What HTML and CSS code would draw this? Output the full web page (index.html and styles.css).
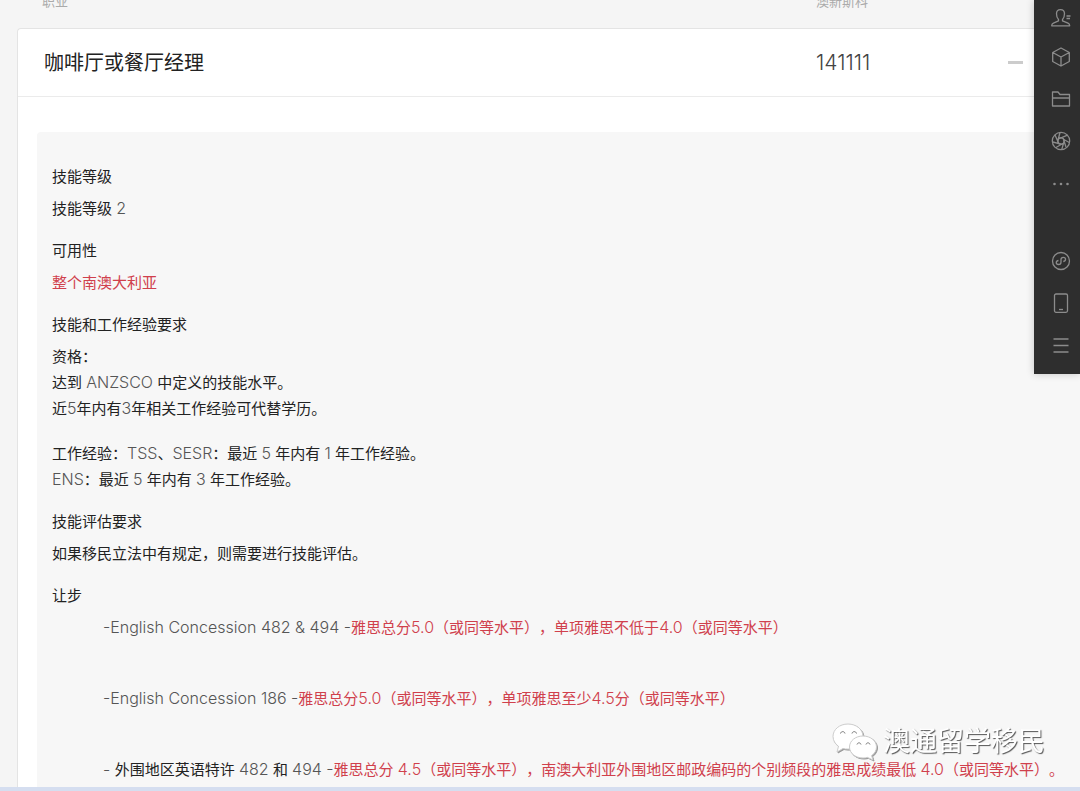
FILE: index.html
```html
<!DOCTYPE html>
<html lang="zh-CN">

<head>
     <meta charset="UTF-8" />
     <title>咖啡厅或餐厅经理</title>
     <meta name="viewport" content="width=device-width, initial-scale=1" />
     <link rel="stylesheet" href="styles.css">
</head>

<body>

     <div class="columns list-head">
          <span>职业</span>
          <span>澳新斯科</span>
     </div>

     <main class="card">
          <div class="columns card-head">
               <h1>咖啡厅或餐厅经理</h1>
               <span class="code">141111</span>
               <button class="toggle" aria-label="收起"></button>
          </div>

          <div class="details">
               <h2>技能等级</h2>
               <p>技能等级 <span class="latin">2</span></p>

               <h2>可用性</h2>
               <p class="red">整个南澳大利亚</p>

               <h2>技能和工作经验要求</h2>
               <p>资格：<br>
                    达到 <span class="latin">ANZSCO</span> 中定义的技能水平。<br>
                    近<span class="latin">5</span>年内有<span class="latin">3</span>年相关工作经验可代替学历。</p>
               <p>工作经验：<span class="latin">TSS</span>、<span class="latin">SESR</span>：最近 <span class="latin">5</span> 年内有 <span class="latin">1</span> 年工作经验。<br>
                    <span class="latin">ENS</span>：最近 <span class="latin">5</span> 年内有 <span class="latin">3</span> 年工作经验。</p>

               <h2>技能评估要求</h2>
               <p>如果移民立法中有规定，则需要进行技能评估。</p>

               <h2>让步</h2>
               <ul class="concessions">
                    <li><span class="latin">-English Concession 482 &amp; 494 -</span><span class="red">雅思总分<span class="latin">5.0</span>（或同等水平），单项雅思不低于<span class="latin">4.0</span>（或同等水平）</span></li>
                    <li><span class="latin">-English Concession 186 -</span><span class="red">雅思总分<span class="latin">5.0</span>（或同等水平），单项雅思至少<span class="latin">4.5</span>分（或同等水平）</span></li>
                    <li><span class="latin">- </span>外围地区英语特许 <span class="latin">482</span> 和 <span class="latin">494 -</span><span class="red">雅思总分 <span class="latin">4.5</span>（或同等水平），南澳大利亚外围地区邮政编码的个别频段的雅思成绩最低 <span class="latin">4.0</span>（或同等水平）。</span></li>
               </ul>
          </div>
     </main>

     <nav class="sidebar">
          <button aria-label="联系人">
               <svg viewBox="0 0 20 20"><path d="M7.500 11.500C5.800 10 5.500 7.800 5.500 5.800 5.500 3.400 7.200 1.700 9.500 1.700s4 1.700 4 4.100c0 2-.3 4.200-2 5.700v1.400l5.500 2.300c1.200.5 1.700 1.300 1.700 2.600H.7c0-1.300.5-2.100 1.700-2.600l5.100-2.300zM15.500 8h4M15.500 10.500h3.500" /></svg>
          </button>
          <button aria-label="收藏">
               <svg viewBox="0 0 20 20"><path d="M10 1l8.300 4.500v9L10 19l-8.300-4.500v-9zM1.700 5.500L10 10l8.300-4.500M10 10v9" /></svg>
          </button>
          <button aria-label="文件">
               <svg viewBox="0 0 20 20"><path d="M1.500 17v-14h5.500l2 2.500h9.500v11.500zM1.500 9h17" /></svg>
          </button>
          <button aria-label="朋友圈">
               <svg viewBox="0 0 20 20"><circle cx="10" cy="10" r="8.700" /><circle cx="10" cy="10" r="3.200" /><path d="M10 6.800l6.500-2.600M12.300 7.700l2.700 8.300M13.200 10l-2.500 8.600M12.300 12.300L5 16.500M10 13.200L1.800 11M7.700 12.300L4 4M6.800 10L9 1.500M7.700 7.700l8-3.200M12.800 8.500l5.500 3" /></svg>
          </button>
          <button aria-label="更多">
               <svg class="filled" viewBox="0 0 20 20"><circle cx="3.500" cy="11" r="1.300" /><circle cx="10" cy="11" r="1.300" /><circle cx="16.500" cy="11" r="1.300" /></svg>
          </button>
          <button class="lower" aria-label="小程序">
               <svg viewBox="0 0 20 20"><circle cx="10" cy="10" r="8.500" /><path d="M7.500 9.500c-3 .5-3 4 0 4 1.500 0 2.500-1 2.500-2.300V8.500c0-1.300 1-2.200 2.300-2.200 3 0 3 3.700 0 4.200" /></svg>
          </button>
          <button aria-label="手机">
               <svg viewBox="0 0 20 20"><rect x="3.500" y="1" width="13" height="18.300" rx="1.500" /><path d="M8 16.500h4" /></svg>
          </button>
          <button aria-label="设置">
               <svg viewBox="0 0 20 20"><path d="M2.500 4h15M2.500 10.500h15M2.500 17h15" /></svg>
          </button>
     </nav>

     <div class="watermark">
          <svg viewBox="0 0 46 38">
               <path d="M16 1C7.500 1 1 6.500 1 13.500c0 4 2.200 7.500 5.500 9.800L5 29l6-3.500c1.600.4 3.300.6 5 .6 8.400 0 15-5.600 15-12.600S24.400 1 16 1z" />
               <path d="M31 13c-7.500 0-13.500 4.800-13.500 11S23.500 35 31 35c1.500 0 3-.2 4.500-.6L41 37l-1.400-4.400c3-2 4.900-5.200 4.900-8.600 0-6.200-6-11-13.500-11z" />
               <path class="eyes" d="M8.500 10.500c.5-2.500 4-2.500 4.500 0M20 10.500c.5-2.500 4-2.500 4.500 0M25 21.500c.5-2.200 3.500-2.200 4 0M34 21.500c.5-2.200 3.500-2.200 4 0" />
          </svg>
          <span>澳通留学移民</span>
     </div>

     <footer class="bottom-bar"></footer>

</body>

</html>
```
FILE: styles.css
```css
:root {
     --bg: #f5f5f5;
     --panel: #f7f7f7;
     --text: #222;
     --latin: #555;
     --red: #d0404c;
     --sidebar: #2e2e2e;
}

* {
     box-sizing: border-box;
     margin: 0;
     padding: 0;
}

body {
     height: 100vh;
     overflow: hidden;
     font-family: Inter, "Noto Sans CJK SC", sans-serif;
     font-size: 15px;
     line-height: 26px;
     color: var(--text);
     background: var(--bg);
     text-spacing-trim: space-all;
}

.columns {
     display: grid;
     grid-template-columns: 1fr 192px 72px;
     align-items: center;
     padding-left: 26px;
}

/* scrolled half out of view */
.list-head {
     height: 36px;
     margin: -8px 0 0 16px;
     align-items: start;
     font-size: 13px;
     line-height: 18px;
     color: #aaa;
}

.card {
     margin-left: 17px;
     background: white;
     border: 1px solid #e4e4e4;
     border-right: none;
     border-radius: 4px 0 0 0;
}

.card-head {
     height: 68px;
     border-bottom: 1px solid #ebebeb;
}

.card-head h1 {
     font-size: 20px;
     font-weight: 400;
}

.code {
     font-size: 21px;
     font-weight: 300;
     color: #444;
}

.toggle {
     width: 15px;
     height: 3px;
     border: none;
     background: #ccc;
     cursor: pointer;
}

.details {
     margin: 35px 0 0 19px;
     padding: 32px 0 40px 15px;
     background: var(--panel);
     border-radius: 4px 0 0 0;
     white-space: nowrap;
}

.details h2 {
     font-size: 15px;
     font-weight: 400;
     margin-bottom: 6px;
}

.details p {
     margin-bottom: 16px;
}

.details p + p {
     margin-top: 19px;
}

.latin {
     font-size: 16px;
     font-weight: 300;
     line-height: 1;
     color: var(--latin);
}

.red,
.red .latin {
     color: var(--red);
}

.concessions {
     list-style: none;
     padding-left: 51px;
}

.concessions li {
     margin-bottom: 45px;
}

.sidebar {
     position: fixed;
     top: 0;
     right: 0;
     width: 46px;
     height: 374px;
     display: flex;
     flex-direction: column;
     background: var(--sidebar);
     box-shadow: 0 0 8px rgba(0, 0, 0, 0.2);
}

.sidebar button {
     height: 42px;
     padding-left: 8px;
     border: none;
     background: none;
     cursor: pointer;
}

.sidebar button:first-child {
     height: 36px;
}

.sidebar .lower {
     margin-top: 36px;
}

.sidebar svg {
     display: block;
     width: 20px;
     height: 20px;
     margin: 0 auto;
     fill: none;
     stroke: #8c8c8c;
     stroke-width: 1.3;
     stroke-linejoin: round;
}

.sidebar .filled {
     fill: #8c8c8c;
     stroke: none;
}

.watermark {
     position: fixed;
     right: 35px;
     bottom: 30px;
     display: flex;
     align-items: center;
     gap: 5px;
     font-size: 27px;
     line-height: 38px;
     color: white;
     text-shadow: 1px 1px 1px #555;
}

.watermark svg {
     width: 46px;
     height: 38px;
     fill: white;
     stroke: #ccc;
     filter: drop-shadow(1px 1px 0 #999);
}

.watermark .eyes {
     fill: none;
     stroke: #777;
}

.bottom-bar {
     position: fixed;
     left: 0;
     right: 0;
     bottom: 0;
     height: 4px;
     background: #d5def0;
}
```
